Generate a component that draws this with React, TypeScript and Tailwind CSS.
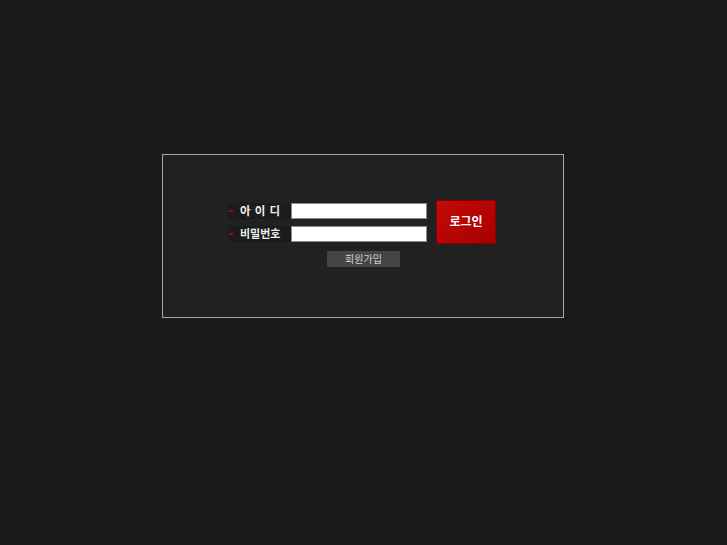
import React from 'react';

export default function App() {
  return (
    <div
      className="min-h-screen w-full bg-[#1b1b1b] pt-[154px] pl-[162px]"
      style={{ fontFamily: '"Noto Sans CJK KR", "Noto Sans", sans-serif' }}
    >
      <div className="w-[402px] h-[164px] border border-[#a8a8a8] bg-[#212121] pt-[45px] pl-[65px]">
        <div className="flex items-center h-[44px]">
          <div className="flex flex-col gap-[7px]">
            <div className="flex items-center h-[16px]">
              <div className="flex items-center w-[63px] h-[16px] bg-[#1c1c1c]">
                <span className="ml-[1px] w-[4px] h-[2px] bg-[#c00000]" />
                <span className="ml-[7px] text-[11.5px] font-bold leading-none text-[#eeeeee] tracking-[0.8px]">아 이 디</span>
              </div>
              <input className="w-[136px] h-[16px] bg-white border border-[#8a8a8a] outline-none" />
            </div>
            <div className="flex items-center h-[16px]">
              <div className="flex items-center w-[63px] h-[16px] bg-[#1c1c1c]">
                <span className="ml-[1px] w-[4px] h-[2px] bg-[#c00000]" />
                <span className="ml-[7px] text-[11px] font-bold leading-none text-[#eeeeee]">비밀번호</span>
              </div>
              <input type="password" className="w-[136px] h-[16px] bg-white border border-[#8a8a8a] outline-none" />
            </div>
          </div>
          <button className="ml-[9px] w-[60px] h-[44px] bg-gradient-to-br from-[#c40a0a] to-[#a80000] border border-[#8a0000] text-white text-[12px] font-bold pb-[3px]">
            로그인
          </button>
        </div>
        <div className="flex mt-[7px] ml-[99px]">
          <button className="w-[73px] h-[16px] bg-[#454545] text-[#d0d0d0] text-[10px] leading-none">
            회원가입
          </button>
        </div>
      </div>
    </div>
  );
}
